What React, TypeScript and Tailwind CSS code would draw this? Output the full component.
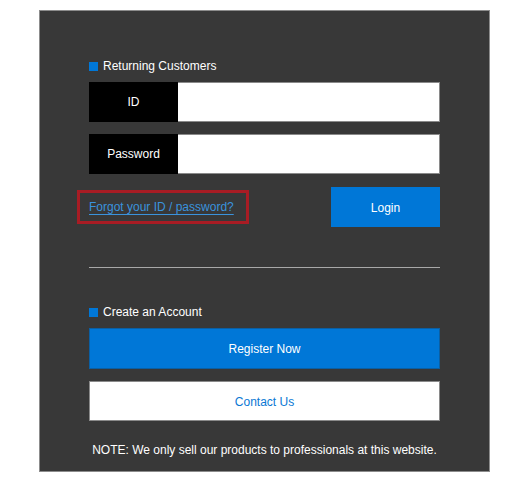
import React, { useState } from "react";

const font = { fontFamily: '"Liberation Sans", Arial, Helvetica, sans-serif' };

function Heading({ children }: { children: React.ReactNode }) {
  return (
    <div className="flex items-center h-4 text-[12px] leading-4 text-white">
      <span className="w-[9px] h-[9px] bg-[#0077d7] mr-[5px]" />
      {children}
    </div>
  );
}

function Field({ label, type, value, onChange }: {
  label: string;
  type: string;
  value: string;
  onChange: (v: string) => void;
}) {
  return (
    <div className="flex h-10">
      <div className="w-[89px] bg-black text-white text-[12px] flex items-center justify-center">
        {label}
      </div>
      <input
        type={type}
        value={value}
        onChange={(e) => onChange(e.target.value)}
        className="flex-1 bg-white border border-l-0 border-[#8a8a8a] px-2 text-[12px] text-black outline-none"
      />
    </div>
  );
}

export default function App() {
  const [id, setId] = useState("");
  const [password, setPassword] = useState("");

  return (
    <div className="w-[525px] h-[482px] bg-white pt-[10px] pl-[39px]" style={font}>
      <div className="w-[451px] h-[462px] border border-[#8c8c8c] bg-[#383838] px-[49px] pt-[47px] flex flex-col">
        {/* Returning customers */}
        <Heading>Returning Customers</Heading>
        <div className="mt-2 flex flex-col gap-3">
          <Field label="ID" type="text" value={id} onChange={setId} />
          <Field label="Password" type="password" value={password} onChange={setPassword} />
        </div>

        <div className="mt-[13px] flex items-center justify-between">
          <div className="-ml-[12px] border-[3px] border-[#a81c24] pl-[9px] pr-[12px] py-[6px]">
            <a href="#" className="block text-[12px] leading-4 text-[#3a93dd] underline underline-offset-[3px] decoration-[#3a93dd]">
              Forgot your ID / password?
            </a>
          </div>
          <button className="w-[109px] h-10 bg-[#0077d7] text-white text-[12px] pt-px">
            Login
          </button>
        </div>

        <div className="mt-10 h-px bg-[#a8a8a8]" />

        {/* Create account */}
        <div className="mt-[36px]">
          <Heading>Create an Account</Heading>
        </div>
        <button className="mt-2 h-[41px] bg-[#0077d7] border border-[#0b5fa3] text-white text-[12px]">
          Register Now
        </button>
        <button className="mt-3 h-10 bg-white border border-[#8a8a8a] text-[#0a78d4] text-[12px] pt-px">
          Contact Us
        </button>

        <p className="mt-[21px] text-center text-[12px] leading-4 text-white">
          NOTE: We only sell our products to professionals at this website.
        </p>
      </div>
    </div>
  );
}
